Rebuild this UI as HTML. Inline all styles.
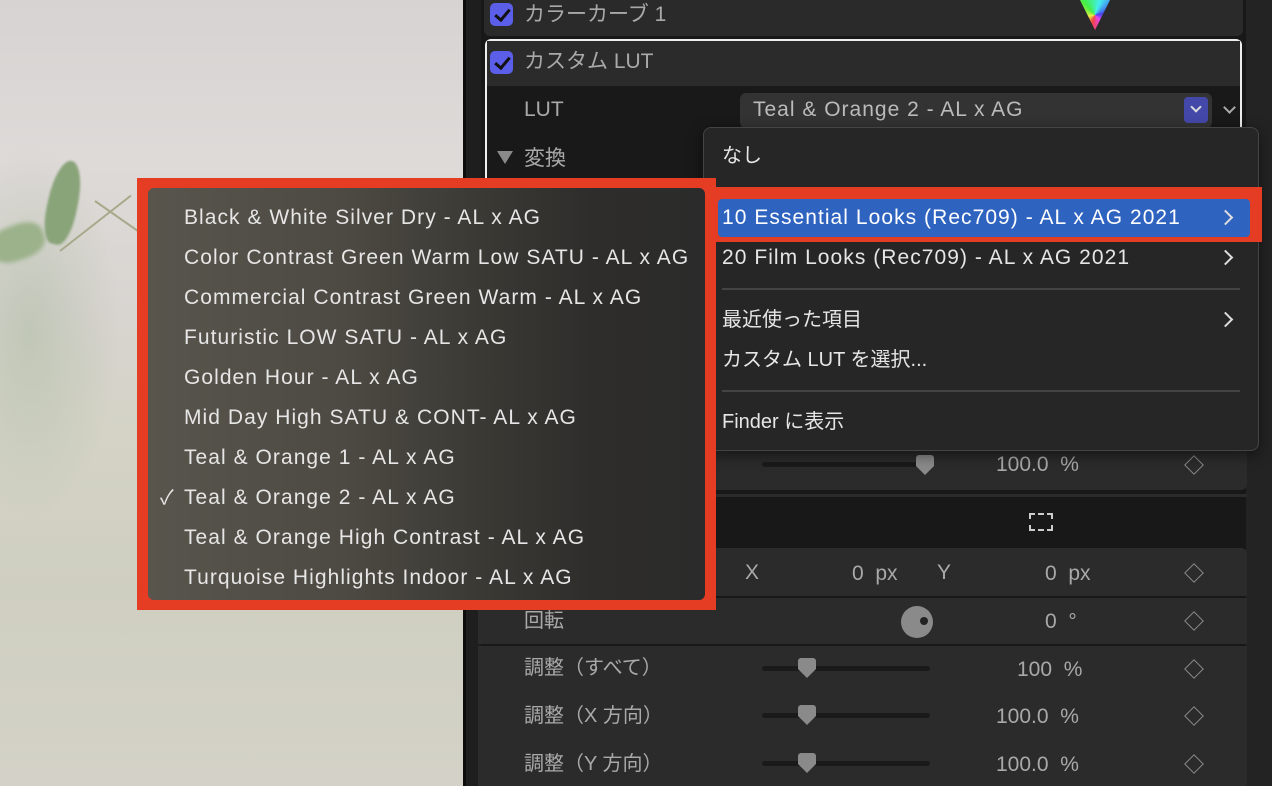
<!DOCTYPE html>
<html><head><meta charset="utf-8"><style>
*{margin:0;padding:0;box-sizing:border-box}
body{width:1272px;height:786px;overflow:hidden;position:relative;background:#222;font-family:"Liberation Sans","Noto Sans CJK JP",sans-serif}
.a{position:absolute}
.t{position:absolute;white-space:nowrap;color:#a9a9a9;font-size:20px;line-height:24px}
.w{color:#e6e6e6}
.m{font-size:21px;letter-spacing:1.05px}
.row{position:absolute;left:478px;width:769px;background:#2b2b2b}
.track{position:absolute;height:5px;background:#1a1a1a;border-radius:3px}
.knob{position:absolute;width:18px;height:20px;background:#8a8a8a;clip-path:polygon(0 0,100% 0,100% 55%,50% 100%,0 55%);border-radius:3px}
.dia{position:absolute;width:14px;height:14px;border:1.5px solid #8a8a8a;transform:rotate(45deg)}
.chk{position:absolute;width:23px;height:23px;background:#5b5ee8;border-radius:5px}
.chk:after{content:"";position:absolute;left:8px;top:3px;width:6px;height:12px;border:solid #111;border-width:0 3px 3px 0;transform:rotate(40deg)}
.chev{position:absolute;width:11px;height:11px;border:solid #ddd;border-width:2.5px 2.5px 0 0;transform:rotate(45deg)}
</style></head><body>
<!-- photo -->
<div class="a" style="left:0;top:0;width:463px;height:786px;background:linear-gradient(180deg,#d7d3d2 0%,#dedad8 20%,#d8d4d0 40%,#d4d3c6 55%,#cfcfc1 75%,#d4d2c8 100%)"></div>
<div class="a" style="left:-60px;top:140px;width:180px;height:380px;background:radial-gradient(ellipse at center,rgba(150,175,140,.35),rgba(0,0,0,0) 70%)"></div>
<div class="a" style="left:48px;top:160px;width:30px;height:85px;background:#8aa47a;border-radius:50% 50% 40% 40%;transform:rotate(12deg);filter:blur(1px)"></div>
<div class="a" style="left:-10px;top:225px;width:55px;height:35px;background:#9cb28b;border-radius:40%;transform:rotate(-20deg);filter:blur(2px)"></div>
<div class="a" style="left:60px;top:250px;width:90px;height:2px;background:#a7a98a;transform:rotate(-38deg);transform-origin:left"></div>
<div class="a" style="left:95px;top:200px;width:55px;height:2px;background:#a7a98a;transform:rotate(35deg);transform-origin:left"></div>
<!-- panel chrome -->
<div class="a" style="left:463px;top:0;width:3px;height:786px;background:#0d0d0d"></div>
<div class="a" style="left:466px;top:0;width:15px;height:786px;background:#1e1e1e"></div>
<div class="a" style="left:481px;top:0;width:765px;height:786px;background:#181818"></div>
<div class="a" style="left:1246px;top:0;width:26px;height:786px;background:#232323"></div>
<!-- color curve card -->
<div class="a" style="left:484px;top:0;width:759px;height:36px;background:#2a2a2a;border-radius:0 0 6px 6px"></div>
<div class="chk" style="left:490px;top:3px"></div>
<div class="t" style="left:524px;top:3px;font-size:21px">カラーカーブ 1</div>
<div class="a" style="left:1080px;top:0;width:30px;height:30px;background:conic-gradient(from 200deg,#e44,#ee4,#4e4,#4ee,#44e,#e4e,#e44);clip-path:polygon(0 0,100% 0,50% 100%)"></div>
<!-- custom LUT box -->
<div class="a" style="left:485px;top:39px;width:757px;height:140px;border:2px solid #eee;border-bottom:none;border-radius:6px 6px 0 0;background:#191919"></div>
<div class="a" style="left:487px;top:41px;width:753px;height:45px;background:#2b2b2b"></div>
<div class="chk" style="left:490px;top:51px"></div>
<div class="t" style="left:524px;top:50px;font-size:21px">カスタム LUT</div>
<div class="t" style="left:524px;top:98px;font-size:21px">LUT</div>
<div class="a" style="left:740px;top:93px;width:472px;height:35px;background:#333;border-radius:6px"></div>
<div class="t" style="left:753px;top:98px;font-size:21px;letter-spacing:1px;color:#bbb">Teal &amp; Orange 2 - AL x AG</div>
<div class="a" style="left:1184px;top:97px;width:24px;height:26px;background:#4448a8;border-radius:4px"></div>
<div class="a" style="left:1192px;top:103px;width:8px;height:8px;border:solid #ddd;border-width:0 2px 2px 0;transform:rotate(45deg)"></div>
<div class="a" style="left:1225px;top:103px;width:9px;height:9px;border:solid #aaa;border-width:0 2px 2px 0;transform:rotate(45deg)"></div>
<div class="a" style="left:497px;top:151px;width:0;height:0;border-left:8px solid transparent;border-right:8px solid transparent;border-top:13px solid #8a8a8a"></div>
<div class="t" style="left:524px;top:147px;font-size:21px">変換</div>
<!-- lower rows -->
<div class="row" style="top:440px;height:50px;border-radius:0 0 6px 6px"></div>
<div class="track" style="left:762px;top:462px;width:168px"></div>
<div class="knob" style="left:916px;top:455px"></div>
<div class="t" style="left:996px;top:453px;font-size:21px">100.0 &nbsp;%</div>
<div class="dia" style="left:1187px;top:458px"></div>
<div class="a" style="left:478px;top:494px;width:769px;height:3px;background:#2b2b2b"></div>
<div class="a" style="left:1029px;top:513px;width:24px;height:18px;border:2px dashed #ccc"></div>
<div class="row" style="top:548px;height:48px;border-radius:6px 6px 0 0"></div>
<div class="t" style="left:745px;top:561px;font-size:21px">X</div>
<div class="t" style="left:852px;top:562px;font-size:21px">0 &nbsp;px</div>
<div class="t" style="left:937px;top:561px;font-size:21px">Y</div>
<div class="t" style="left:1045px;top:562px;font-size:21px">0 &nbsp;px</div>
<div class="dia" style="left:1187px;top:566px"></div>
<div class="row" style="top:598px;height:46px"></div>
<div class="t" style="left:524px;top:609px">回転</div>
<div class="a" style="left:901px;top:606px;width:32px;height:32px;border-radius:50%;background:#8a8a8a"></div>
<div class="a" style="left:920px;top:617px;width:8px;height:8px;border-radius:50%;background:#222"></div>
<div class="t" style="left:1045px;top:610px;font-size:21px">0 &nbsp;°</div>
<div class="dia" style="left:1187px;top:614px"></div>
<div class="row" style="top:646px;height:140px"></div>
<div class="t" style="left:524px;top:656px">調整（すべて）</div>
<div class="track" style="left:762px;top:666px;width:168px"></div>
<div class="knob" style="left:798px;top:658px"></div>
<div class="t" style="left:1017px;top:658px;font-size:21px">100 &nbsp;%</div>
<div class="dia" style="left:1187px;top:662px"></div>
<div class="t" style="left:524px;top:704px">調整（X 方向）</div>
<div class="track" style="left:762px;top:713px;width:168px"></div>
<div class="knob" style="left:798px;top:705px"></div>
<div class="t" style="left:996px;top:705px;font-size:21px">100.0 &nbsp;%</div>
<div class="dia" style="left:1187px;top:709px"></div>
<div class="t" style="left:524px;top:752px">調整（Y 方向）</div>
<div class="track" style="left:762px;top:761px;width:168px"></div>
<div class="knob" style="left:798px;top:753px"></div>
<div class="t" style="left:996px;top:753px;font-size:21px">100.0 &nbsp;%</div>
<div class="dia" style="left:1187px;top:757px"></div>
<!-- right dropdown -->
<div class="a" style="left:703px;top:127px;width:556px;height:324px;background:#262626;border:1px solid #444;border-radius:8px;box-shadow:0 4px 14px rgba(0,0,0,.5)"></div>
<div class="t w" style="left:722px;top:144px">なし</div>
<div class="a" style="left:713px;top:187px;width:549px;height:55px;background:#e43d24"></div>
<div class="a" style="left:718px;top:199px;width:532px;height:38px;background:#2f63c0;border-radius:4px"></div>
<div class="t w m" style="left:722px;top:206px;color:#fff">10 Essential Looks (Rec709) - AL x AG 2021</div>
<div class="chev" style="left:1220px;top:212px"></div>
<div class="t w m" style="left:722px;top:246px">20 Film Looks (Rec709) - AL x AG 2021</div>
<div class="chev" style="left:1220px;top:252px"></div>
<div class="a" style="left:722px;top:288px;width:518px;height:2px;background:#444"></div>
<div class="t w" style="left:722px;top:308px">最近使った項目</div>
<div class="chev" style="left:1220px;top:314px"></div>
<div class="t w" style="left:722px;top:348px">カスタム LUT を選択...</div>
<div class="a" style="left:722px;top:390px;width:518px;height:2px;background:#444"></div>
<div class="t w" style="left:722px;top:410px">Finder に表示</div>
<!-- left submenu -->
<div class="a" style="left:137px;top:178px;width:579px;height:432px;background:#e43d24"></div>
<div class="a" style="left:148px;top:188px;width:557px;height:412px;border-radius:6px;background:linear-gradient(90deg,#58554d 0%,#4d4a43 35%,#3a3934 60%,#2e2d2b 80%,#2b2b2b 100%)"></div>
<div class="t w m" style="left:184px;top:206px">Black &amp; White Silver Dry - AL x AG</div>
<div class="t w m" style="left:184px;top:246px">Color Contrast Green Warm Low SATU - AL x AG</div>
<div class="t w m" style="left:184px;top:286px">Commercial Contrast Green Warm - AL x AG</div>
<div class="t w m" style="left:184px;top:326px">Futuristic LOW SATU - AL x AG</div>
<div class="t w m" style="left:184px;top:366px">Golden Hour - AL x AG</div>
<div class="t w m" style="left:184px;top:406px">Mid Day High SATU &amp; CONT- AL x AG</div>
<div class="t w m" style="left:184px;top:446px">Teal &amp; Orange 1 - AL x AG</div>
<div class="t w" style="left:160px;top:486px">✓</div>
<div class="t w m" style="left:184px;top:486px">Teal &amp; Orange 2 - AL x AG</div>
<div class="t w m" style="left:184px;top:526px">Teal &amp; Orange High Contrast - AL x AG</div>
<div class="t w m" style="left:184px;top:566px">Turquoise Highlights Indoor - AL x AG</div>
</body></html>
